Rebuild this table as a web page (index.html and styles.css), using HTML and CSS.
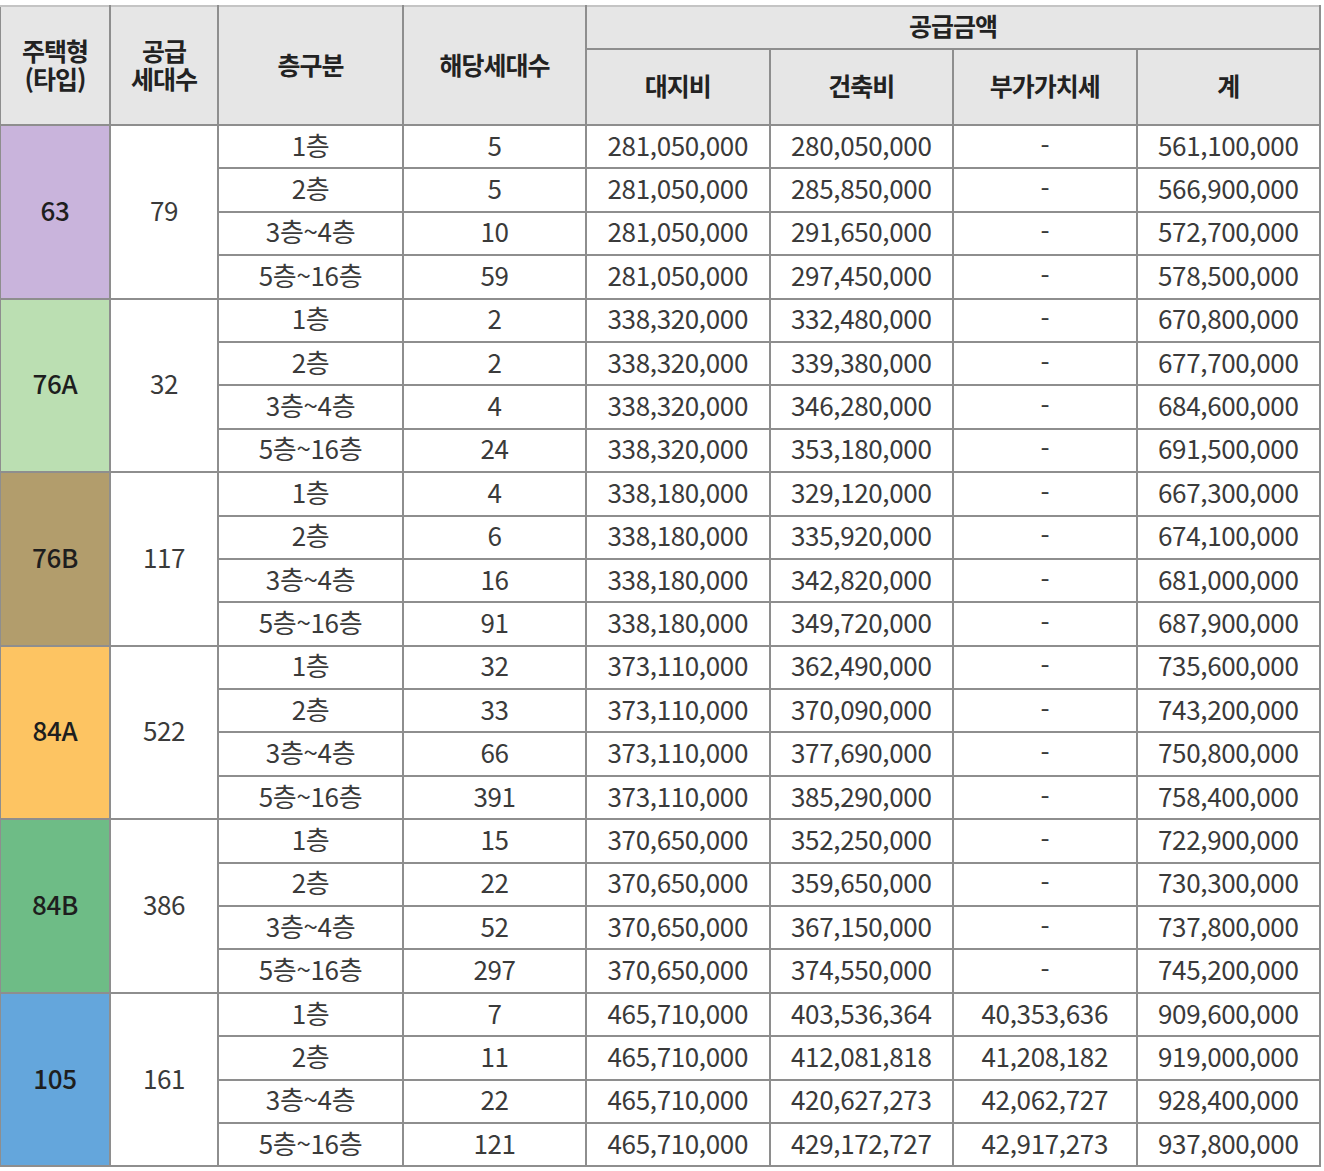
FILE: index.html
```html
<!DOCTYPE html>
<html lang="ko">
<head>
<meta charset="utf-8">
<link rel="stylesheet" href="styles.css">
</head>
<body>
<table class="price">
  <colgroup>
    <col class="c-type"><col class="c-cnt"><col class="c-floor"><col class="c-units">
    <col class="c-money"><col class="c-money"><col class="c-money"><col class="c-money">
  </colgroup>
  <thead>
    <tr class="h1">
      <th rowspan="2"><span class="ln">주택형</span><span class="ln">(타입)</span></th>
      <th rowspan="2"><span class="ln">공급</span><span class="ln">세대수</span></th>
      <th rowspan="2">층구분</th>
      <th rowspan="2">해당세대수</th>
      <th colspan="4" class="top">공급금액</th>
    </tr>
    <tr class="h2">
      <th>대지비</th><th>건축비</th><th>부가가치세</th><th>계</th>
    </tr>
  </thead>
  <tbody>
    <tr><td rowspan="4" class="type t63">63</td><td rowspan="4">79</td><td>1층</td><td>5</td><td>281,050,000</td><td>280,050,000</td><td>-</td><td>561,100,000</td></tr>
    <tr><td>2층</td><td>5</td><td>281,050,000</td><td>285,850,000</td><td>-</td><td>566,900,000</td></tr>
    <tr><td>3층~4층</td><td>10</td><td>281,050,000</td><td>291,650,000</td><td>-</td><td>572,700,000</td></tr>
    <tr><td>5층~16층</td><td>59</td><td>281,050,000</td><td>297,450,000</td><td>-</td><td>578,500,000</td></tr>

    <tr><td rowspan="4" class="type t76a">76A</td><td rowspan="4">32</td><td>1층</td><td>2</td><td>338,320,000</td><td>332,480,000</td><td>-</td><td>670,800,000</td></tr>
    <tr><td>2층</td><td>2</td><td>338,320,000</td><td>339,380,000</td><td>-</td><td>677,700,000</td></tr>
    <tr><td>3층~4층</td><td>4</td><td>338,320,000</td><td>346,280,000</td><td>-</td><td>684,600,000</td></tr>
    <tr><td>5층~16층</td><td>24</td><td>338,320,000</td><td>353,180,000</td><td>-</td><td>691,500,000</td></tr>

    <tr><td rowspan="4" class="type t76b">76B</td><td rowspan="4">117</td><td>1층</td><td>4</td><td>338,180,000</td><td>329,120,000</td><td>-</td><td>667,300,000</td></tr>
    <tr><td>2층</td><td>6</td><td>338,180,000</td><td>335,920,000</td><td>-</td><td>674,100,000</td></tr>
    <tr><td>3층~4층</td><td>16</td><td>338,180,000</td><td>342,820,000</td><td>-</td><td>681,000,000</td></tr>
    <tr><td>5층~16층</td><td>91</td><td>338,180,000</td><td>349,720,000</td><td>-</td><td>687,900,000</td></tr>

    <tr><td rowspan="4" class="type t84a">84A</td><td rowspan="4">522</td><td>1층</td><td>32</td><td>373,110,000</td><td>362,490,000</td><td>-</td><td>735,600,000</td></tr>
    <tr><td>2층</td><td>33</td><td>373,110,000</td><td>370,090,000</td><td>-</td><td>743,200,000</td></tr>
    <tr><td>3층~4층</td><td>66</td><td>373,110,000</td><td>377,690,000</td><td>-</td><td>750,800,000</td></tr>
    <tr><td>5층~16층</td><td>391</td><td>373,110,000</td><td>385,290,000</td><td>-</td><td>758,400,000</td></tr>

    <tr><td rowspan="4" class="type t84b">84B</td><td rowspan="4">386</td><td>1층</td><td>15</td><td>370,650,000</td><td>352,250,000</td><td>-</td><td>722,900,000</td></tr>
    <tr><td>2층</td><td>22</td><td>370,650,000</td><td>359,650,000</td><td>-</td><td>730,300,000</td></tr>
    <tr><td>3층~4층</td><td>52</td><td>370,650,000</td><td>367,150,000</td><td>-</td><td>737,800,000</td></tr>
    <tr><td>5층~16층</td><td>297</td><td>370,650,000</td><td>374,550,000</td><td>-</td><td>745,200,000</td></tr>

    <tr><td rowspan="4" class="type t105">105</td><td rowspan="4">161</td><td>1층</td><td>7</td><td>465,710,000</td><td>403,536,364</td><td>40,353,636</td><td>909,600,000</td></tr>
    <tr><td>2층</td><td>11</td><td>465,710,000</td><td>412,081,818</td><td>41,208,182</td><td>919,000,000</td></tr>
    <tr><td>3층~4층</td><td>22</td><td>465,710,000</td><td>420,627,273</td><td>42,062,727</td><td>928,400,000</td></tr>
    <tr><td>5층~16층</td><td>121</td><td>465,710,000</td><td>429,172,727</td><td>42,917,273</td><td>937,800,000</td></tr>
  </tbody>
</table>
</body>
</html>
```

FILE: styles.css
```css
html, body {
  margin: 0;
  padding: 0;
  background: #ffffff;
}

body {
  padding-top: 5px;
  font-family: "Noto Sans CJK KR", "Noto Sans", sans-serif;
  color: #333333;
}

.price {
  border-collapse: collapse;
  table-layout: fixed;
  width: 1320px;
  margin-left: -1px;
}

.c-type { width: 110px; }
.c-cnt { width: 108px; }
.c-floor { width: 185px; }
.c-units { width: 183px; }
.c-money { width: 183.5px; }

.price th,
.price td {
  border: 2px solid #8e8e8e;
  padding: 0;
  text-align: center;
  vertical-align: middle;
  white-space: nowrap;
  overflow: hidden;
}

.price th {
  background: #e6e6e6;
  color: #222222;
  font-weight: 700;
  font-size: 25px;
  letter-spacing: -1px;
  line-height: 30px;
  padding-bottom: 4px;
}

.price th .ln {
  display: block;
  height: 28px;
  line-height: 28px;
}

.price th.top {
  padding-bottom: 6px;
}

.price thead tr:first-child th {
  border-top-color: #c4c4c4;
}

.h1 { height: 43px; }
.h2 { height: 76px; }

.price td {
  font-size: 26px;
  letter-spacing: -0.35px;
  line-height: 30px;
  color: #3a3a3a;
  padding-bottom: 4px;
}

.price tbody tr { height: 43.4px; }

.price td.type {
  color: #1e1e1e;
  font-weight: 500;
}

.t63 { background: #c9b4dc; }
.t76a { background: #bbdfb2; }
.t76b { background: #b29d6c; }
.t84a { background: #fdc462; }
.t84b { background: #6ebc86; }
.t105 { background: #64a6dc; }
```
